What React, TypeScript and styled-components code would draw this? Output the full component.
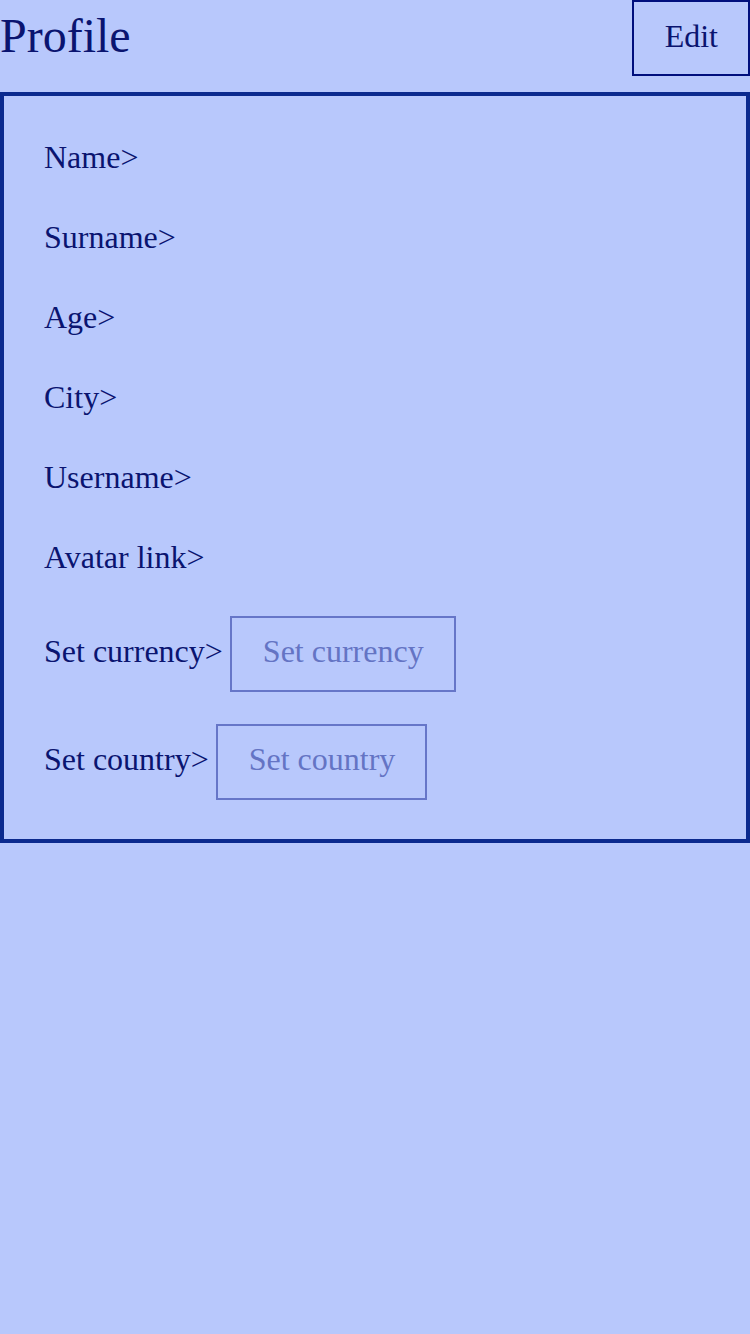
import React from "react";
import styled, { createGlobalStyle } from "styled-components";

const Global = createGlobalStyle`
  html, body {
    margin: 0;
    padding: 0;
    background: #b8c8fc;
  }
  body {
    font-family: "Liberation Serif", "Times New Roman", serif;
    color: #0a1470;
    min-height: 1334px;
  }
`;

const Page = styled.div`
  display: flex;
  flex-direction: column;
  width: 750px;
`;

const Header = styled.header`
  display: flex;
  justify-content: space-between;
  align-items: center;
  height: 76px;
`;

const Title = styled.h1`
  margin: 0 0 6px;
  font-size: 48px;
  font-weight: 400;
  line-height: 55px;
  color: #0a1470;
`;

const EditButton = styled.button`
  box-sizing: border-box;
  height: 76px;
  padding: 15px 30px 19px 31px;
  border: 2px solid #000f7d;
  background: transparent;
  font-family: "Liberation Serif", "Times New Roman", serif;
  font-size: 32px;
  line-height: 37px;
  color: #0a1470;
  cursor: pointer;
`;

const Card = styled.section`
  margin-top: 16px;
  border: 4px solid #0b2a8e;
  padding: 41px 40px 39px;
  display: flex;
  flex-direction: column;
`;

const TextRow = styled.div<{ $last?: boolean }>`
  font-size: 32px;
  line-height: 40px;
  margin-bottom: ${(p) => (p.$last ? "39px" : "40px")};
`;

const SelectRow = styled.div<{ $last?: boolean }>`
  display: flex;
  align-items: center;
  font-size: 32px;
  line-height: 37px;
  margin-bottom: ${(p) => (p.$last ? "0" : "32px")};
`;

const SelectLabel = styled.span`
  margin-bottom: 6px;
`;

const SelectBox = styled.div`
  box-sizing: border-box;
  height: 76px;
  margin-left: 7px;
  padding: 0 30px 6px 31px;
  border: 2px solid #6676c8;
  display: flex;
  align-items: center;
  color: #6474c4;
  font-size: 32px;
`;

const fields = ["Name", "Surname", "Age", "City", "Username", "Avatar link"];
const selects = ["Set currency", "Set country"];

export default function App() {
  return (
    <>
      <Global />
      <Page>
        <Header>
          <Title>Profile</Title>
          <EditButton>Edit</EditButton>
        </Header>
        <Card>
          {fields.map((f, i) => (
            <TextRow key={f} $last={i === fields.length - 1}>
              {f}&gt;
            </TextRow>
          ))}
          {selects.map((s, i) => (
            <SelectRow key={s} $last={i === selects.length - 1}>
              <SelectLabel>{s}&gt;</SelectLabel>
              <SelectBox>{s}</SelectBox>
            </SelectRow>
          ))}
        </Card>
      </Page>
    </>
  );
}
